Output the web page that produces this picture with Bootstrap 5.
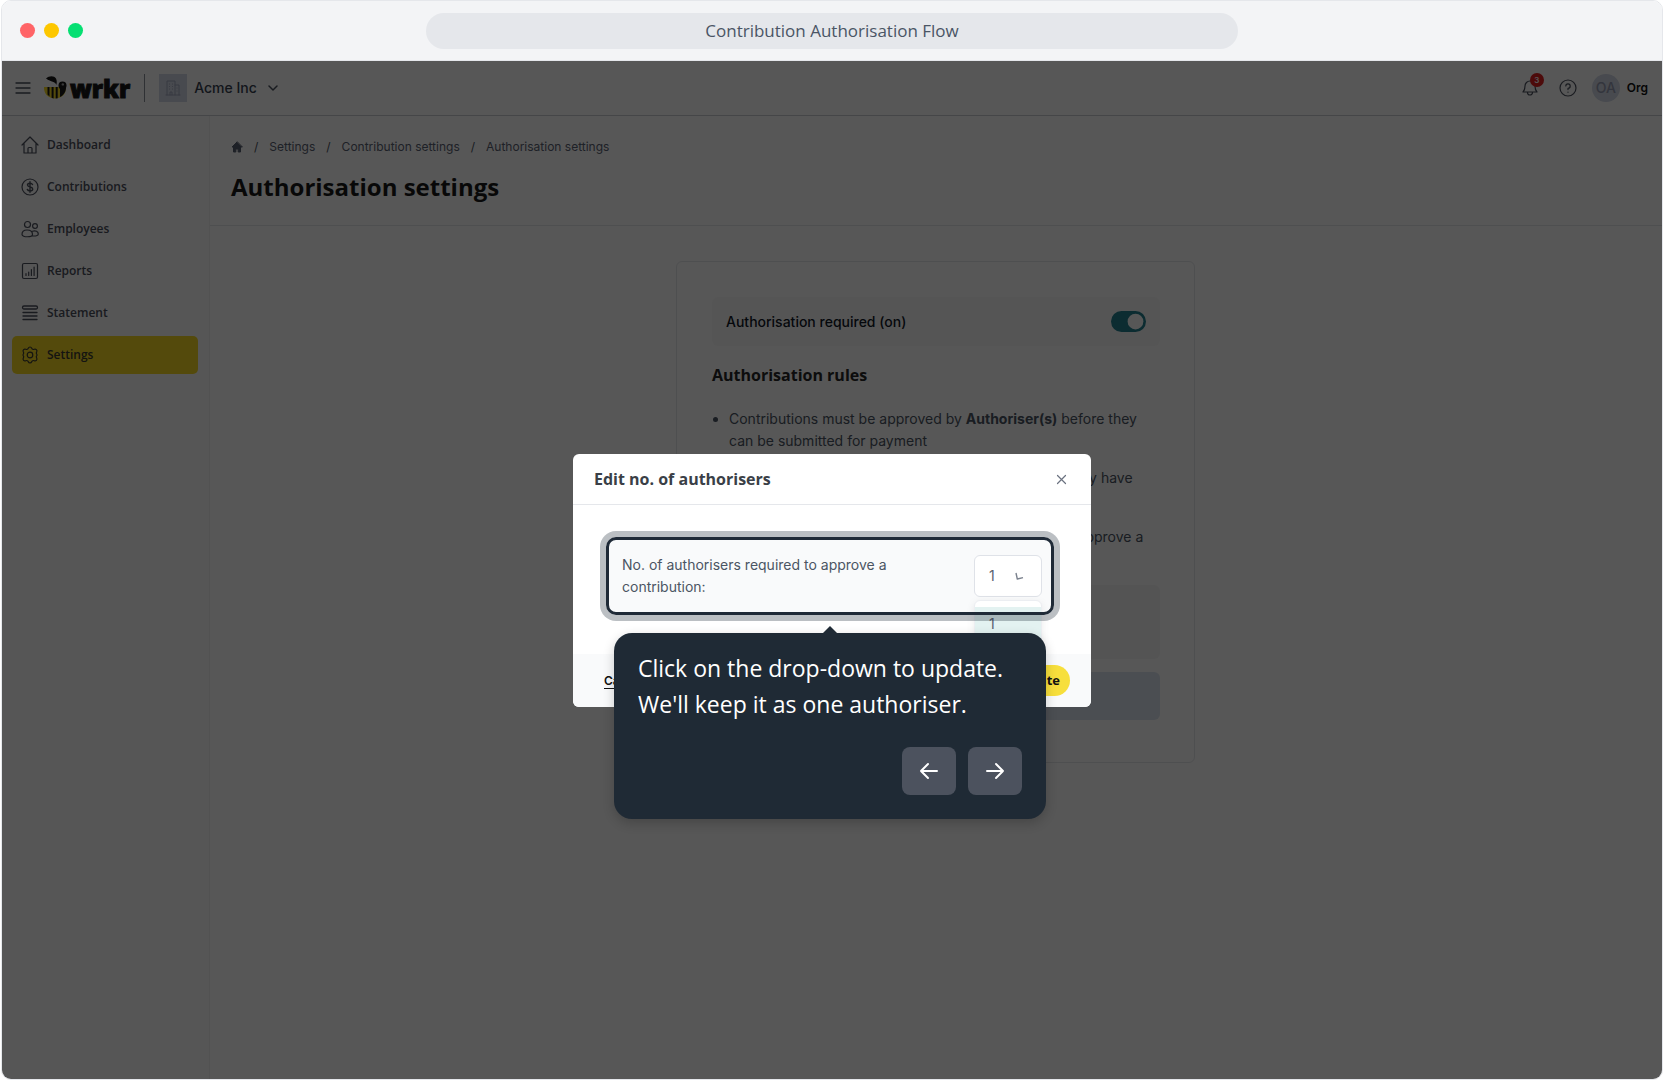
<!DOCTYPE html>
<html lang="en">
<head>
<meta charset="utf-8">
<meta name="viewport" content="width=device-width, initial-scale=1">
<title>Contribution Authorisation Flow</title>
<link href="https://cdn.jsdelivr.net/npm/bootstrap@5.3.0/dist/css/bootstrap.min.css" rel="stylesheet">
<style>
  :root { --ink: #1f2a37; --line: #e5e7eb; --muted: #4b5563; --round: "Open Sans", "Noto Sans", sans-serif; }
  body { font-family: Inter, "Liberation Sans", sans-serif; font-size: 14px; line-height: 22px; color: var(--muted); background: #fff; }
  svg { display: block; fill: none; stroke: currentColor; stroke-width: 1.5; stroke-linecap: round; stroke-linejoin: round; flex: none; }
  .window-frame { height: 100vh; padding: 0 1px; }
  .window-shell { border: 1px solid var(--line); border-radius: 10px; overflow: hidden; }
  .window-bar { height: 60px; background: #f3f4f6; border-bottom: 1px solid var(--line); padding: 0 18px; display: grid; grid-template-columns: 1fr minmax(0, 812px) 1fr; align-items: center; }
  .light { width: 15px; height: 15px; margin-right: 1px; border-radius: 50%; }
  .light-red { background: #ff6467; } .light-amber { background: #fdc700; } .light-green { background: #05df72; }
  .address { height: 36px; border-radius: 18px; background: var(--line); color: #4a5565; font: 17px/36px var(--round); }

  .stage { min-height: 0; }
  .topbar { height: 55px; border-bottom: 1px solid #c9cdd3; padding: 0 14px 0 13px; color: #4b515e; }
  .plain-btn { background: none; border: 0; padding: 0; color: inherit; }
  .brand { color: #1a1a1a; text-decoration: none; margin-left: 12px; gap: 3px; }
  .wordmark { font: 800 24px/28px "Open Sans", sans-serif; -webkit-text-stroke: 1px #1a1a1a; margin-top: 2px; }
  .brand-rule { width: 1px; height: 28px; background: #8a8f99; margin: 0 14px; }
  .org-tile { width: 28px; height: 28px; background: #d3d8e6; color: #a2a8bf; margin-right: 7px; }
  .org-name { font-weight: 500; font-size: 14px; margin-right: 11px; color: #374151; }
  .top-actions { gap: 21px; }
  .top-user { gap: 7px; margin-left: -6px; }
  .bell-count { position: absolute; top: -6px; left: 8px; width: 14px; height: 14px; border-radius: 50%; background: #e02020; color: #fff; font: 600 8px/14px Inter, sans-serif; text-align: center; }
  .face { width: 28px; height: 28px; border-radius: 50%; background: #d3d8e6; color: #969cb2; font-weight: 500; line-height: 28px; text-align: center; }
  .user-name { font-weight: 600; font-size: 12px; color: #111; }

  .side { width: 208px; padding: 10px 11px 0 10px; background: #fbfbfb; border-right: 1px solid #f0f0f0; }
  .side-list { gap: 4px; }
  .side .nav-link { height: 38px; padding: 0 9px; gap: 8px; border-radius: 5px; color: #4b4f5c; font: 600 12px/38px var(--round); }
  .side .nav-link.active { background: #f7da23; color: #3c3c32; }

  .page-head { padding: 20px 21px 0; height: 110px; border-bottom: 1px solid var(--line); }
  .trail { font-size: 12px; line-height: 22px; gap: 11px; }
  .trail a { color: #5a6172; text-decoration: none; }
  .page-title { font: 700 24px/34px var(--round); color: #1a1a1a; margin: 12px 0 0; }
  .rules-card { width: 519px; margin: 35px 0 0 466px; padding: 35px 34px 35px 35px; height: 502px; border: 1px solid var(--line); border-radius: 6px; background: #fff; }
  .toggle-row { height: 49px; padding: 0 14px; border-radius: 6px; background: #fafafa; }
  .toggle-row label { color: #111827; font-weight: 500; }
  .toggle-row .form-check-input { width: 35px; height: 21px; margin: 0; border: 0; background-color: #24818f; box-shadow: none; }
  .rules-title { font: 700 16px/24px var(--round); color: #262626; margin: 17px 0 21px; }
  .rules-list { padding-left: 17px; margin: 0; color: #4b5563; }
  .rules-list li { min-height: 44px; margin-bottom: 15px; }
  .info-a { height: 74px; margin-top: 14px; border-radius: 6px; background: #f7f7f7; }
  .info-b { height: 48px; margin-top: 13px; border-radius: 6px; background: #dbe5f0; }

  .veil { position: absolute; inset: 0; background: rgba(0, 0, 0, .66); padding-top: 393px; }
  .dialog-box { width: 518px; height: 253px; background: #fff; border-radius: 6px; }
  .dialog-head { height: 51px; padding: 0 24px 0 21px; border-bottom: 1px solid var(--line); }
  .dialog-head h2 { font: 700 16px/24px var(--round); color: #3a3f47; margin: 0; }
  .dialog-main { height: 149px; padding: 32px 37px 0 33px; }
  .dialog-foot { padding: 0 21px 0 31px; background: #f9fafb; border-radius: 0 0 6px 6px; }
  .cancel-link { font-weight: 600; font-size: 12px; color: #111; text-underline-offset: 3px; }
  .go-btn { height: 31px; padding: 0 10px; border: 0; border-radius: 16px; background: #f7df3c; color: #111; font: 700 13px/31px var(--round); }
  .field-box { height: 78px; padding: 0 12px 0 16px; border-radius: 10px; background: #f9fafb; }
  .field-box label { width: 280px; }
  .field-box::after { content: ""; position: absolute; inset: 0; border: 3px solid var(--ink); border-radius: 10px; box-shadow: 0 0 0 6px rgba(31, 42, 55, .3); pointer-events: none; }
  .count-pick { width: 68px; }
  .count-pick select { display: block; appearance: none; width: 68px; height: 42px; padding: 0 14px; border: 1px solid #dfe2e8; border-radius: 6px; background: #fff; color: #5b6370; font: 14px/22px Inter, sans-serif; }
  .count-pick svg { position: absolute; right: 18px; top: 17px; pointer-events: none; color: #7b828e; }
  .pick-menu { position: absolute; left: 0; top: 45px; width: 68px; padding: 6px 0; border: 1px solid #eceef2; border-radius: 6px; background: #fff; box-shadow: 0 2px 8px rgba(0, 0, 0, .08); margin: 0; list-style: none; }
  .pick-menu li { height: 34px; padding: 0 14px; background: #e3f2f1; color: #5b6370; line-height: 34px; }

  .coach { position: absolute; top: 96px; left: 8px; width: 432px; padding: 17px 24px 24px; border-radius: 18px; background: #1f2a35; color: #fff; box-shadow: 0 4px 12px rgba(0, 0, 0, .2); z-index: 2; }
  .coach::before { content: ""; position: absolute; left: 209px; top: -7px; border: 7px solid transparent; border-top: 0; border-bottom-color: #1f2a35; }
  .coach p { font: 23px/36px var(--round); margin: 0 0 25px; white-space: nowrap; }
  .coach-nav { gap: 12px; }
  .coach button { width: 54px; height: 48px; border: 0; border-radius: 8px; background: #4c525e; color: #fff; padding: 0; }
  .coach svg { stroke-width: 2; margin: auto; }
</style>
<script src="https://cdn.jsdelivr.net/npm/bootstrap@5.3.0/dist/js/bootstrap.bundle.min.js"></script>
</head>
<body>
<div class="window-frame">
<div class="window-shell d-flex flex-column h-100">
  <header class="window-bar">
    <div class="d-flex gap-2">
      <span class="light light-red"></span><span class="light light-amber"></span><span class="light light-green"></span>
    </div>
    <div class="address text-center">Contribution Authorisation Flow</div>
  </header>

  <div class="stage position-relative flex-grow-1 d-flex flex-column">
    <nav class="topbar d-flex align-items-center justify-content-between" aria-label="Top">
      <div class="d-flex align-items-center">
        <button class="plain-btn" type="button" aria-label="Menu"><svg width="16" height="12" viewBox="0 0 16 12"><path stroke-width="1.3" d="M1 1h14M1 6h14M1 11h14"/></svg></button>
        <a class="brand d-flex align-items-center" href="#" aria-label="wrkr">
          <svg width="24" height="24" viewBox="0 0 24 24">
            <g stroke="none">
              <path fill="#1a1a1a" d="M3 2.500C6-.5 11-.8 13 2.500c1 2 1 4.500.3 6.500C12.500 5.500 8 6 3 2.500z"/>
              <path fill="#f7da23" d="M1 11h22c.3 6.500-4 11.500-11 11.500S.7 17.500 1 11z"/>
              <path fill="#1a1a1a" d="M4.500 11h2v9.500l-2-2zM8.600 11h2v11.400l-2-.6zM12.700 11h2v11.200l-2 .2zM17 11h6c.2 4.300-1.800 8-6 10z"/>
              <circle cx="19.500" cy="9.500" r="4" fill="#1a1a1a"/><circle cx="19.800" cy="8.400" r="1.200" fill="#aaa"/>
            </g>
          </svg>
          <span class="wordmark">wrkr</span>
        </a>
        <span class="brand-rule"></span>
        <span class="org-tile d-flex align-items-center justify-content-center"><svg width="16" height="16" viewBox="0 0 16 16"><path stroke-width="1" d="M1 15h14M2 15V1h8v14M10 5h4v10M5 15v-3h2v3M4.500 4v.1M7.500 4v.1M4.500 6.500v.1M7.500 6.500v.1M4.500 9v.1M7.500 9v.1M12 8v.1M12 11v.1"/></svg></span>
        <button class="plain-btn d-flex align-items-center" type="button"><span class="org-name">Acme Inc</span><svg width="10" height="6" viewBox="0 0 10 6"><path d="M1 1l4 4 4-4"/></svg></button>
      </div>
      <div class="top-actions d-flex align-items-center">
        <button class="plain-btn position-relative" type="button" aria-label="Notifications"><svg width="16" height="18" viewBox="0 0 16 18"><path stroke-width="1.200" d="M1 13h14c-1.500-1.500-2-3-2-6a5 5 0 0 0-10 0c0 3-.5 4.500-2 6zM5.500 13.500a2.500 2.500 0 0 0 5 0"/></svg><span class="bell-count">3</span></button>
        <button class="plain-btn" type="button" aria-label="Help"><svg width="18" height="18" viewBox="0 0 18 18"><path stroke-width="1.200" d="M9 1a8 8 0 1 1 0 16A8 8 0 0 1 9 1zM6.800 7A2.200 2.200 0 1 1 9 9.300V10.600M9 13v.2"/></svg></button>
        <div class="top-user d-flex align-items-center">
          <span class="face">OA</span>
          <span class="user-name">Org</span>
        </div>
      </div>
    </nav>

    <div class="d-flex flex-grow-1">
      <aside class="side flex-shrink-0">
        <nav class="side-list nav flex-column" aria-label="Main">
          <a class="nav-link d-flex align-items-center" href="#"><svg width="18" height="18" viewBox="0 0 18 18"><path stroke-width="1.200" d="M1 9l8-8 8 8M3 7.500V17h12V7.500M7 17v-4.500a1 1 0 0 1 1-1h2a1 1 0 0 1 1 1V17"/></svg>Dashboard</a>
          <a class="nav-link d-flex align-items-center" href="#"><svg width="18" height="18" viewBox="0 0 18 18"><circle cx="9" cy="9" r="8" stroke-width="1.200"/><path stroke-width="1.400" d="M9 3.800v10.400M11.500 6.500C11 5.500 10 5.200 9 5.200c-1.500 0-2.500.7-2.500 1.800C6.500 9.700 11.700 8.300 11.700 11c0 1.200-1.200 1.900-2.700 1.900-1.200 0-2.200-.4-2.700-1.500"/></svg>Contributions</a>
          <a class="nav-link d-flex align-items-center" href="#"><svg width="18" height="18" viewBox="0 0 18 18"><g stroke-width="1.200"><circle cx="6.500" cy="4.500" r="3"/><circle cx="14" cy="6" r="2.400"/><path d="M1 14.500C1 11.500 3 10 6 10s5.500 1.500 5.500 4.500C11.500 17.500 1 17.500 1 14.500zM11.500 11.200c3-1 5.800.3 5.800 2.800 0 1.800-3 2.300-5.800 1.800"/></g></svg>Employees</a>
          <a class="nav-link d-flex align-items-center" href="#"><svg width="18" height="18" viewBox="0 0 18 18"><rect x="1.500" y="1.500" width="15" height="15" rx="1.500" stroke-width="1.200"/><path stroke-width="1.200" d="M5 13.500v-2M7.700 13.500V10M10.400 13.500V7.500M13.100 13.500V5"/></svg>Reports</a>
          <a class="nav-link d-flex align-items-center" href="#"><svg width="18" height="18" viewBox="0 0 18 18"><rect x="1.500" y="2" width="15" height="3" rx="1.500" stroke-width="1.300"/><path stroke-width="1.300" d="M2 8.500h14M2 12h14M2 15.500h14"/></svg>Statement</a>
          <a class="nav-link active d-flex align-items-center" href="#" aria-current="page"><svg width="18" height="18" viewBox="0 0 18 18"><g stroke-width="1.200"><circle cx="9" cy="9" r="2.800"/><path d="M7.300 2.200a1.800 1.800 0 0 1 3.400 0 1.800 1.800 0 0 0 2.500 1.100 1.900 1.900 0 0 1 2.500 2.600 1.900 1.900 0 0 0 .1 2.400 1.800 1.800 0 0 1 0 1.400 1.900 1.900 0 0 0-.1 2.400 1.900 1.900 0 0 1-2.500 2.600 1.800 1.800 0 0 0-2.500 1.100 1.800 1.800 0 0 1-3.400 0 1.800 1.800 0 0 0-2.500-1.100 1.900 1.900 0 0 1-2.500-2.600 1.900 1.900 0 0 0-.1-2.400 1.800 1.800 0 0 1 0-1.400 1.900 1.900 0 0 0 .1-2.400 1.900 1.900 0 0 1 2.500-2.600 1.800 1.800 0 0 0 2.500-1.100z"/></g></svg>Settings</a>
        </nav>
      </aside>
      <main class="flex-grow-1">
        <div class="page-head">
          <nav class="trail d-flex align-items-center" aria-label="Breadcrumb">
            <a href="#" aria-label="Home"><svg width="12" height="12" viewBox="0 0 12 12"><path fill="currentColor" stroke-width="1" d="M6 1L1 6h1.500v5h2.300V8h2.400v3h2.300V6H11z"/></svg></a>
            <span>/</span><a href="#">Settings</a>
            <span>/</span><a href="#">Contribution settings</a>
            <span>/</span><a href="#" aria-current="page">Authorisation settings</a>
          </nav>
          <h1 class="page-title">Authorisation settings</h1>
        </div>
        <section class="rules-card">
          <div class="toggle-row form-switch d-flex align-items-center justify-content-between">
            <label for="authOn">Authorisation required (on)</label>
            <input class="form-check-input" type="checkbox" role="switch" id="authOn" checked>
          </div>
          <h2 class="rules-title">Authorisation rules</h2>
          <ul class="rules-list">
            <li>Contributions must be approved by <b>Authoriser(s)</b> before they can be submitted for payment</li>
            <li>Authorisers can not approve any contributions that they have submitted</li>
            <li>Sets the minimum number of authorisers required to approve a contribution</li>
          </ul>
          <div class="info-a"></div>
          <div class="info-b"></div>
        </section>
      </main>
    </div>

    <div class="veil d-flex justify-content-center align-items-start">
      <div class="dialog-box d-flex flex-column" role="dialog" aria-labelledby="dlgTitle">
        <div class="dialog-head d-flex align-items-center justify-content-between">
          <h2 id="dlgTitle">Edit no. of authorisers</h2>
          <button class="plain-btn" type="button" aria-label="Close"><svg width="11" height="11" viewBox="0 0 11 11"><path stroke="#6b7280" stroke-width="1.200" d="M1.500 1.500l8 8M9.500 1.500l-8 8"/></svg></button>
        </div>
        <div class="dialog-main">
          <div class="field-box position-relative d-flex align-items-center justify-content-between">
            <label for="authCount">No. of authorisers required to approve a contribution:</label>
            <div class="count-pick position-relative">
              <select id="authCount"><option>1</option></select>
              <svg width="9" height="9" viewBox="0 0 9 9"><path stroke-width="1.400" stroke-linecap="butt" d="M1 1l1.300 6L8 5.600"/></svg>
              <ul class="pick-menu"><li>1</li></ul>
            </div>
            <div class="coach">
              <p>Click on the drop-down to update.<br>We'll keep it as one authoriser.</p>
              <div class="coach-nav d-flex justify-content-end">
                <button type="button" aria-label="Back"><svg width="20" height="18" viewBox="0 0 20 18"><path d="M18 9H2M9 2L2 9l7 7"/></svg></button>
                <button type="button" aria-label="Next"><svg width="20" height="18" viewBox="0 0 20 18"><path d="M2 9h16M11 2l7 7-7 7"/></svg></button>
              </div>
            </div>
          </div>
        </div>
        <div class="dialog-foot flex-grow-1 d-flex align-items-center justify-content-between">
          <a class="cancel-link" href="#">Cancel</a>
          <button class="go-btn" type="button">Update</button>
        </div>
      </div>
    </div>
  </div>
</div>
</div>
</body>
</html>
